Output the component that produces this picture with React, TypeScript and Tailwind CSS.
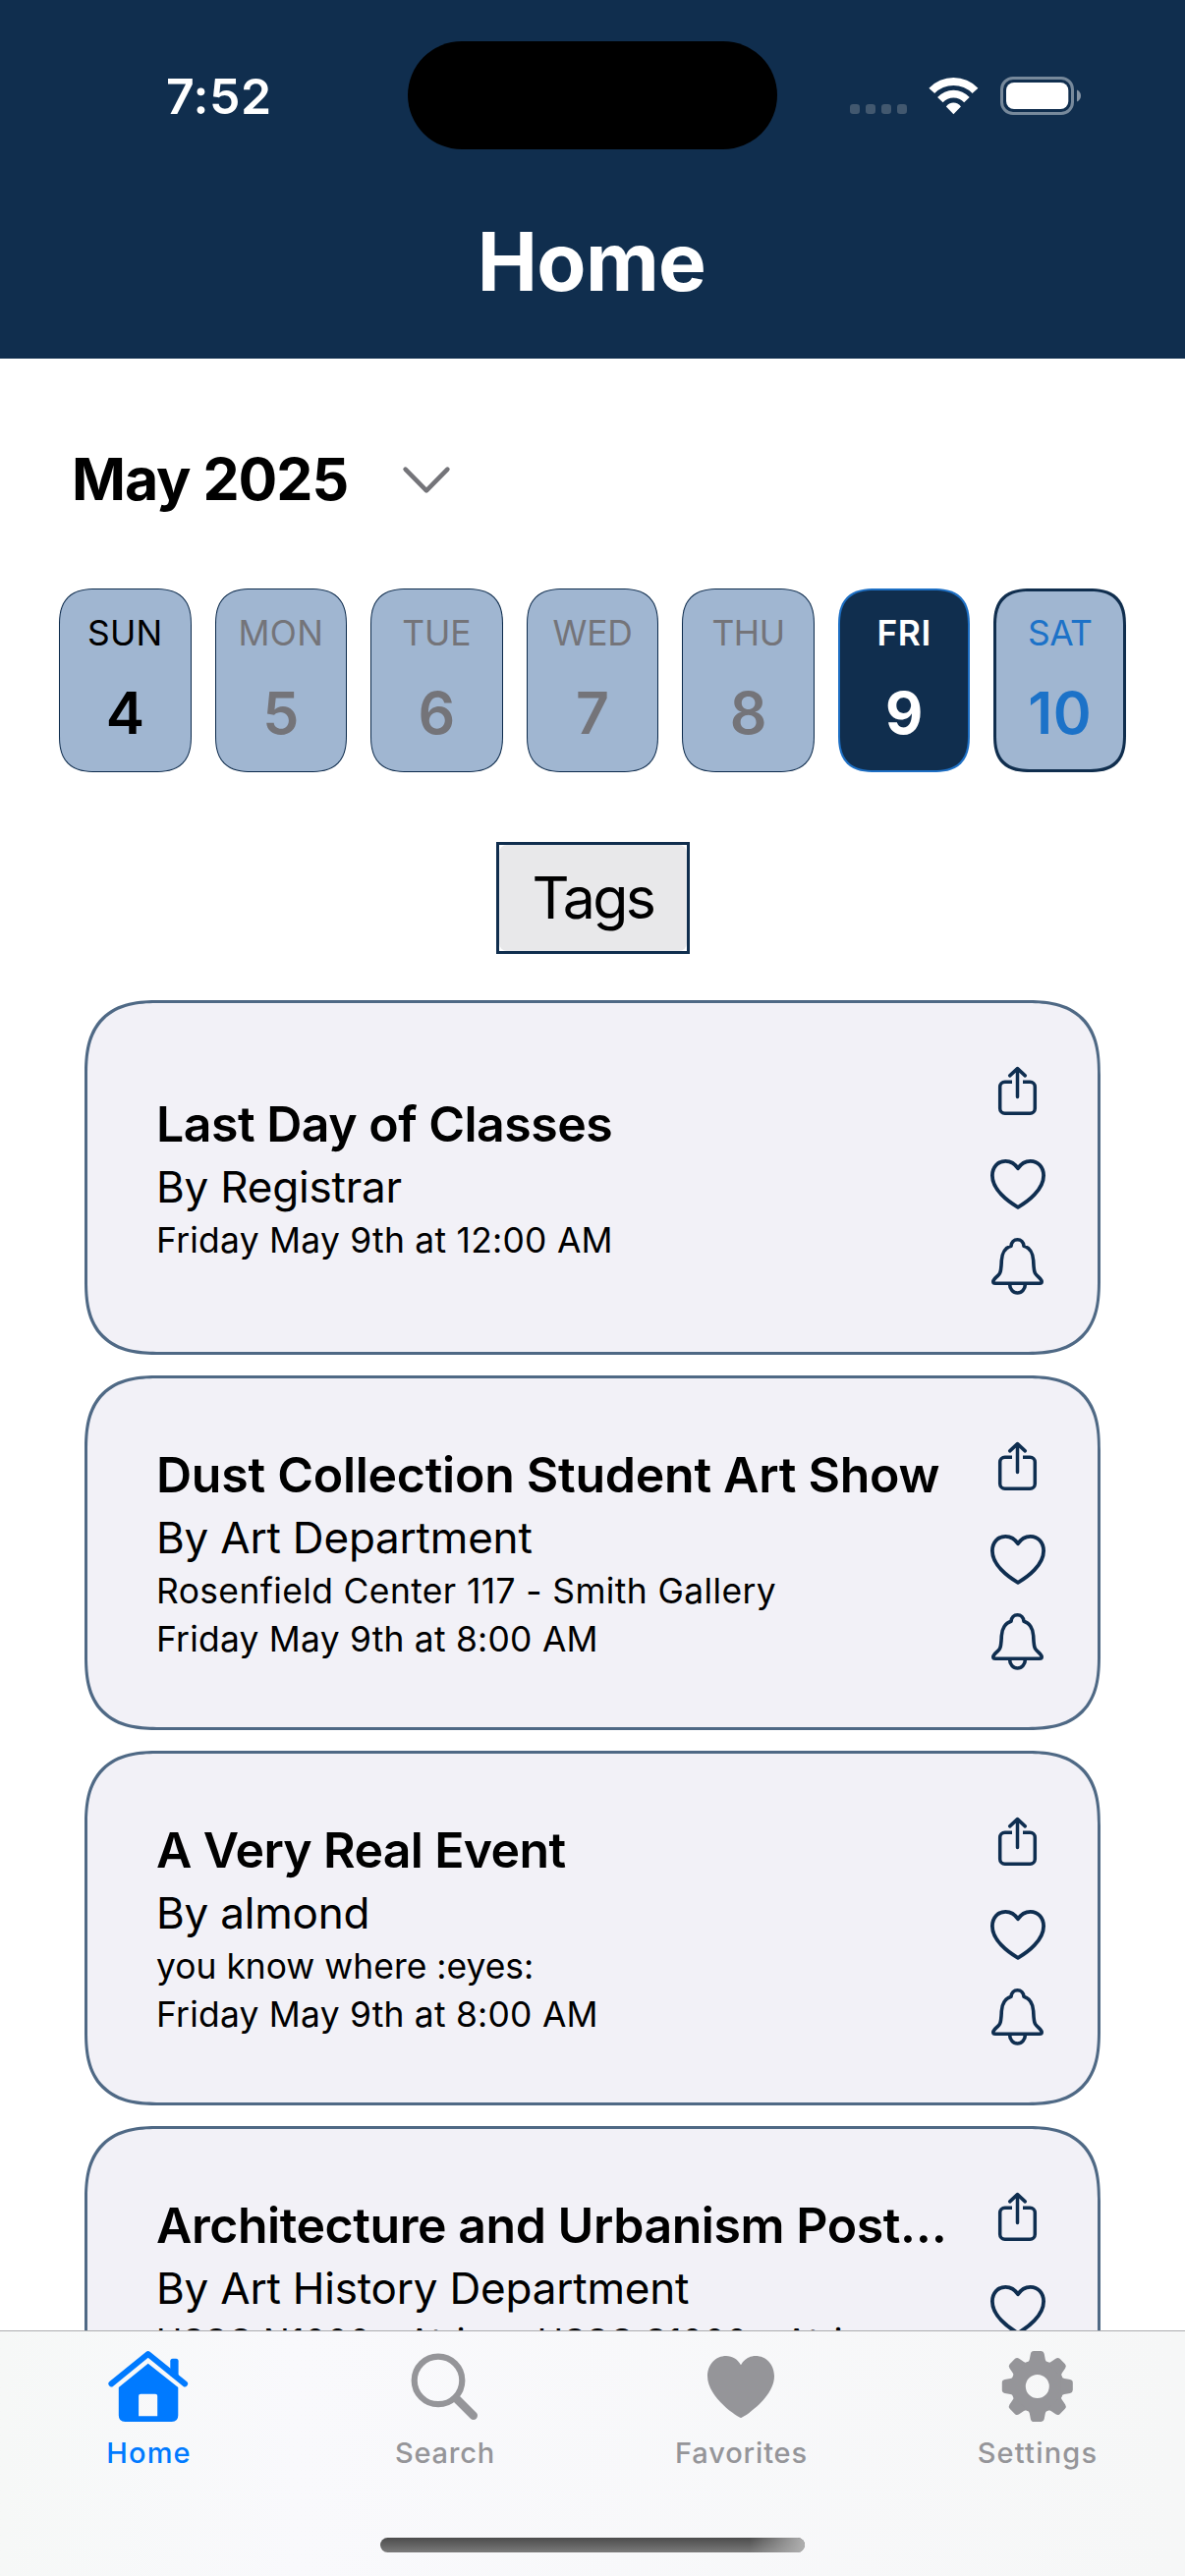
import type { ReactNode } from "react";

type Day = { name: string; num: string; box: string; nameStyle: string; numStyle: string };

const plain = "border border-[#0c2a4b] bg-[#a0b6d1]";
const DAYS: Day[] = [
  { name: "SUN", num: "4", box: `${plain} text-black`, nameStyle: "tracking-[0.3px]", numStyle: "font-semibold" },
  { name: "MON", num: "5", box: `${plain} text-[#747479]`, nameStyle: "tracking-[0.4px]", numStyle: "font-semibold" },
  { name: "TUE", num: "6", box: `${plain} text-[#747479]`, nameStyle: "tracking-normal", numStyle: "font-semibold" },
  { name: "WED", num: "7", box: `${plain} text-[#747479]`, nameStyle: "tracking-[-0.3px]", numStyle: "font-semibold" },
  { name: "THU", num: "8", box: `${plain} text-[#747479]`, nameStyle: "tracking-[-0.4px]", numStyle: "font-semibold" },
  { name: "FRI", num: "9", box: "border-2 border-[#1d6fc4] bg-[#102e4e] text-white", nameStyle: "font-semibold tracking-[0.6px]", numStyle: "font-bold" },
  { name: "SAT", num: "10", box: "border-3 border-[#102e4e] bg-[#a0b6d1] text-[#1c72c8]", nameStyle: "tracking-[-0.5px]", numStyle: "font-semibold tracking-[0.5px]" },
];

type EventItem = {
  title: string;
  titleStyle: string;
  by: string;
  place?: string;
  placeStyle?: string;
  time: string;
  timeStyle: string;
};

const EVENTS: EventItem[] = [
  {
    title: "Last Day of Classes",
    titleStyle: "pt-0.5 tracking-[-0.5px]",
    by: "By Registrar",
    time: "Friday May 9th at 12:00 AM",
    timeStyle: "tracking-[0.27px]",
  },
  {
    title: "Dust Collection Student Art Show",
    titleStyle: "tracking-[-0.26px]",
    by: "By Art Department",
    place: "Rosenfield Center 117 - Smith Gallery",
    placeStyle: "tracking-[0.4px]",
    time: "Friday May 9th at 8:00 AM",
    timeStyle: "tracking-[0.24px]",
  },
  {
    title: "A Very Real Event",
    titleStyle: "tracking-[-0.66px]",
    by: "By almond",
    place: "you know where :eyes:",
    placeStyle: "tracking-[0.02px]",
    time: "Friday May 9th at 8:00 AM",
    timeStyle: "tracking-[0.24px]",
  },
  {
    title: "Architecture and Urbanism Post…",
    titleStyle: "tracking-[-0.44px]",
    by: "By Art History Department",
    place: "HSSC N1000 - Atrium, HSSC S1000 - Atrium",
    placeStyle: "tracking-[0.3px]",
    time: "Friday May 9th at 9:00 AM",
    timeStyle: "tracking-[0.24px]",
  },
];

function StatusBar() {
  return (
    <div className="grid h-[194px] grid-cols-[415px_376px_415px] items-center">
      <div className="pl-[169px] pt-0.5 text-[50px] font-semibold leading-[60px] tracking-[0.5px]">7:52</div>
      <div className="h-[110px] rounded-full bg-black" />
      <div className="flex items-center pl-[74px]">
        <svg className="h-10 w-[58px]" viewBox="0 0 58 40" fill="#42586f">
          <rect x="0" y="29" width="10" height="10" rx="3.2" />
          <rect x="16" y="29" width="10" height="10" rx="3.2" />
          <rect x="32" y="29" width="10" height="10" rx="3.2" />
          <rect x="48" y="29" width="10" height="10" rx="3.2" />
        </svg>
        <svg className="ml-[22px] h-10 w-[51px]" viewBox="0 0 51 40" fill="white">
          <path d="M0.4 12.7A34.5 34.5 0 0 1 50.4 12.7L44.6 18.1A26.8 26.8 0 0 0 6.2 18.1Z" />
          <path d="M9.1 22.1A21.8 21.8 0 0 1 41.7 22.1L36.2 27.2A14.5 14.5 0 0 0 14.6 27.2Z" />
          <path d="M17.9 31.4A9.2 9.2 0 0 1 32.9 31.4L25.4 39.2Z" />
        </svg>
        <svg className="ml-[22px] h-10 w-[83px]" viewBox="0 0 83 40">
          <rect x="1.5" y="2.5" width="72" height="36" rx="11.5" fill="none" stroke="#77899b" strokeWidth="3" />
          <rect x="6" y="7" width="63.3" height="27" rx="8" fill="white" />
          <path d="M78 14.5C80.6 15.6 82 17.8 82 20.5S80.6 25.4 78 26.5Z" fill="#8493a4" />
        </svg>
      </div>
    </div>
  );
}

function ShareIcon() {
  return (
    <svg className="size-[60px]" viewBox="0 0 60 60" fill="none" stroke="#0f2e50" strokeWidth="3.5" strokeLinejoin="round">
      <path d="M24 20.2H16.7A5 5 0 0 0 11.7 25.2V47.3A5 5 0 0 0 16.7 52.3H42.3A5 5 0 0 0 47.3 47.3V25.2A5 5 0 0 0 42.3 20.2H35" />
      <path strokeLinecap="round" d="M29.5 35.5V6.6M21.7 13.9L29.5 6.6L37.3 13.9" />
    </svg>
  );
}

function HeartIcon() {
  return (
    <svg className="mt-[35px] size-[60px]" viewBox="0 0 60 60" fill="none" stroke="#0f2e50" strokeWidth="3.8" strokeLinejoin="round">
      <path d="M30 52.8C20 47 3.9 35 3.9 20.5C3.9 12 9.5 5.8 17.3 5.8C22.8 5.8 27 8.5 30 13.3C33 8.5 37.2 5.8 42.7 5.8C50.5 5.8 56.1 12 56.1 20.5C56.1 35 40 47 30 52.8Z" />
    </svg>
  );
}

function BellIcon() {
  return (
    <svg className="mt-[23px] size-[60px]" viewBox="0 0 60 60" fill="none" stroke="#0f2e50" strokeWidth="3.6" strokeLinejoin="round">
      <path d="M29.5 2.8C26 2.8 23.4 5.5 23 9.2C17 11 13.6 17 13.3 24C13 30 13 34 11.5 37C10 40 4.8 42.5 4.8 45.5C4.8 46.6 5.6 47.2 7 47.2H52C53.4 47.2 54.2 46.6 54.2 45.5C54.2 42.5 49 40 47.5 37C46 34 46 30 45.7 24C45.4 17 42 11 36 9.2C35.6 5.5 33 2.8 29.5 2.8Z" />
      <path d="M21.6 48C21.6 53 25 57 29.5 57S37.4 53 37.4 48" />
    </svg>
  );
}

function EventCard({ event }: { event: EventItem }) {
  return (
    <article className="flex h-[361px] shrink-0 rounded-[76px] border-3 border-[#4f6985] bg-[#f2f1f7] [corner-shape:superellipse(1.4)]">
      <div className="flex min-w-0 flex-1 flex-col justify-center whitespace-nowrap pb-[3px] pl-[70px]">
        <h2 className={`text-[50px] font-semibold leading-[70px] ${event.titleStyle}`}>{event.title}</h2>
        <p className="text-[44px] leading-[59px] tracking-[-0.2px]">{event.by}</p>
        {event.place && <p className={`text-[35.4px] leading-[49px] ${event.placeStyle}`}>{event.place}</p>}
        <p className={`text-[35.4px] leading-[49px] ${event.timeStyle}`}>{event.time}</p>
      </div>
      <div className="mr-[51px] flex w-[60px] flex-col pt-[60px]">
        <ShareIcon />
        <HeartIcon />
        <BellIcon />
      </div>
    </article>
  );
}

function Tab({ label, style, children }: { label: string; style: string; children: ReactNode }) {
  return (
    <div className={`flex flex-col items-center pt-[14px] ${style}`}>
      <svg className="size-[84px]" viewBox="0 0 84 84">
        {children}
      </svg>
      <span className="mt-1.5 pl-[1.5px] text-[29px] font-medium leading-10">{label}</span>
    </div>
  );
}

const TEETH = [0, 45, 90, 135, 180, 225, 270, 315];

function TabBar() {
  return (
    <nav className="h-[250px] shrink-0 border-t border-[#adadb0] bg-linear-to-r from-[#f6f8f7] via-[#f9f9fc] via-25% to-[#f6f7f7]">
      <div className="grid grid-cols-4">
        <Tab label="Home" style="text-[#007aff] tracking-[1.1px]">
          <path d="M4.4 39.4L41.7 9L79.1 39.4" fill="none" stroke="currentColor" strokeWidth="6" strokeLinecap="round" strokeLinejoin="round" />
          <path d="M64.3 31V16.2Q64.3 13.7 66.8 13.7H70.1Q72.6 13.7 72.6 16.2V36Z" fill="currentColor" />
          <path
            fillRule="evenodd"
            fill="currentColor"
            d="M41.7 18.7L72.3 43V71.5Q72.3 78 65.8 78H18.3Q11.8 78 11.8 71.5V43ZM34.1 49.7Q32.1 49.7 32.1 51.7V72.3H51.2V51.7Q51.2 49.7 49.2 49.7Z"
          />
        </Tab>
        <Tab label="Search" style="text-[#959599] tracking-[0.8px]">
          <circle cx="36" cy="35.9" r="24.3" fill="none" stroke="currentColor" strokeWidth="6.2" />
          <path d="M55 55L71.8 71.8" stroke="currentColor" strokeWidth="8.4" strokeLinecap="round" />
        </Tab>
        <Tab label="Favorites" style="text-[#959599] tracking-[0.86px]">
          <path
            fill="currentColor"
            d="M42 74C40 73.8 8 54 8 31.5C8 19.5 16.5 11 27 11C33.5 11 39 14.5 42 20.3C45 14.5 50.5 11 57 11C67.5 11 76 19.5 76 31.5C76 54 44 73.8 42 74Z"
          />
        </Tab>
        <Tab label="Settings" style="text-[#959599] tracking-[1.2px]">
          <g transform="translate(42.8 42)" fill="currentColor">
            <circle r="19.5" fill="none" stroke="currentColor" strokeWidth="15" />
            {TEETH.map((a) => (
              <path key={a} transform={`rotate(${a})`} d="M-10.5 -24Q-8.4 -25 -8 -27.5L-6.9 -33.2Q-6.3 -36 -3.8 -36H3.8Q6.3 -36 6.9 -33.2L8 -27.5Q8.4 -25 10.5 -24Z" />
            ))}
          </g>
        </Tab>
      </div>
      <div className="mx-auto mt-[66px] h-[15px] w-[432px] overflow-hidden rounded-full bg-linear-to-b from-[#4c4c4c] to-[#7b7b7b]">
        <div className="ml-auto h-full w-[56px] bg-linear-to-r from-transparent to-[#b0b0b0]" />
      </div>
    </nav>
  );
}

export default function App() {
  return (
    <div className="flex h-[2622px] w-[1206px] flex-col overflow-hidden bg-white font-['Inter',sans-serif] text-black">
      <header className="h-[365px] shrink-0 bg-[#102e4e] text-white">
        <StatusBar />
        <h1 className="pr-[2px] text-center text-[82px] font-bold leading-[146px] tracking-[-0.7px]">Home</h1>
      </header>
      <main className="flex min-h-0 flex-1 flex-col overflow-hidden">
        <div className="mt-[88px] flex h-[70px] shrink-0 items-center pl-[73px]">
          <span className="text-[59px] font-bold leading-[70px] tracking-[-1.05px]">May 2025</span>
          <svg className="ml-[53.5px] h-[31px] w-[52px]" viewBox="0 0 52 31" fill="none" stroke="#747479" strokeWidth="4.6" strokeLinecap="round" strokeLinejoin="round">
            <path d="M4.6 4.6L26 26.3L47.4 4.6" />
          </svg>
        </div>
        <div className="mx-[60px] mt-[76px] grid h-[187px] shrink-0 grid-cols-7 gap-6">
          {DAYS.map((d) => (
            <div key={d.name} className={`flex flex-col items-center justify-center rounded-[38px] [corner-shape:superellipse(1.4)] ${d.box}`}>
              <span className={`text-[35.4px] leading-[42px] ${d.nameStyle}`}>{d.name}</span>
              <span className={`mt-6 text-[59px] leading-[72px] ${d.numStyle}`}>{d.num}</span>
            </div>
          ))}
        </div>
        <div className="ml-[505px] mt-[71px] h-[114px] w-[197px] shrink-0 border-3 border-[#102e4e] bg-white">
          <div className="h-full rounded-lg bg-[#e8e8ea] text-center text-[59px] leading-[108px] tracking-[-2.6px]">Tags</div>
        </div>
        <div className="mx-[86px] mt-[47px] flex flex-col gap-[21px]">
          {EVENTS.map((e) => (
            <EventCard key={e.title} event={e} />
          ))}
        </div>
      </main>
      <TabBar />
    </div>
  );
}
